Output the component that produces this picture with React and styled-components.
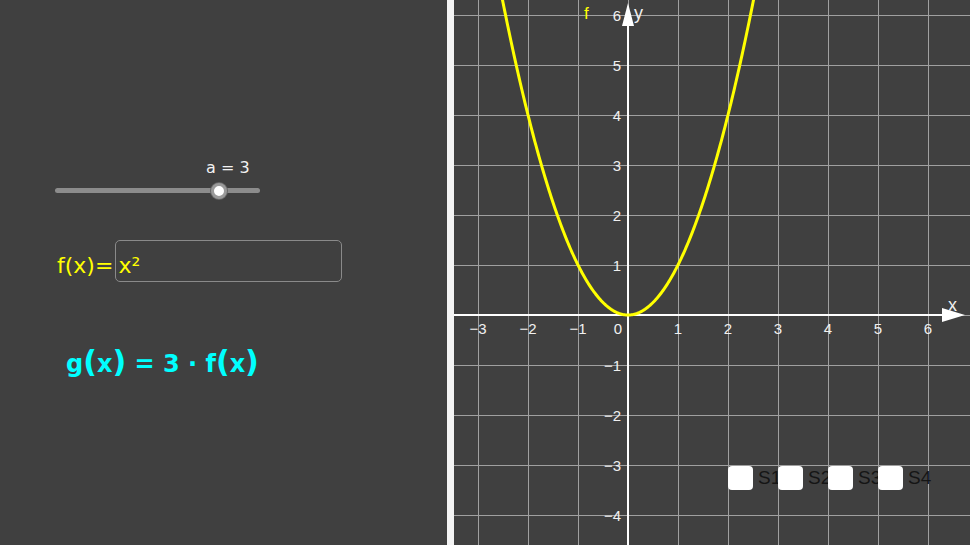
import styled, { createGlobalStyle } from "styled-components"

const BG = "#404040"
const UNIT = 50
const OX = 174
const OY = 315
const GW = 516
const GH = 545

const slider = { name: "a", value: 3, min: -5, max: 5 }
const checks = ["S1", "S2", "S3", "S4"]

const GlobalStyle = createGlobalStyle`
  html, body {
    margin: 0;
    padding: 0;
    background: ${BG};
    overflow: hidden;
  }
  body {
    font-family: "DejaVu Sans", "Liberation Sans", sans-serif;
  }
`

const Page = styled.div`
  display: flex;
  width: 970px;
  height: 545px;
  background: ${BG};
`

const AlgebraPanel = styled.div`
  width: 447px;
  flex-shrink: 0;
  display: flex;
  flex-direction: column;
  padding-top: 158px;
  box-sizing: border-box;
`

const Divider = styled.div`
  width: 7px;
  flex-shrink: 0;
  background: #f4f4f4;
`

const GraphPanel = styled.div`
  position: relative;
  flex: 1;
  overflow: hidden;
`

const SliderLabel = styled.div`
  margin-left: 206px;
  font-size: 16px;
  line-height: 20px;
  color: #f2f2f2;
`

const SliderTrack = styled.div`
  position: relative;
  margin: 10px 0 0 55px;
  width: 205px;
  height: 5px;
  border-radius: 3px;
  background: #8c8c8c;
`

const SliderThumb = styled.div`
  position: absolute;
  top: 50%;
  width: 10px;
  height: 10px;
  border-radius: 50%;
  background: #ffffff;
  border: 3px solid #9a9a9a;
  box-shadow: 0 0 0 1px #666666;
  transform: translate(-50%, -50%);
`

const InputRow = styled.div`
  display: flex;
  align-items: center;
  margin: 47px 0 0 57px;
  color: #ffff00;
  font-size: 22px;
`

const InputLabel = styled.span`
  padding-top: 9px;
  margin-right: 2px;
`

const InputBox = styled.div`
  display: flex;
  align-items: center;
  width: 227px;
  height: 42px;
  box-sizing: border-box;
  padding: 9px 0 0 2px;
  border: 1px solid #8a8a8a;
  border-radius: 5px;
`

const Formula = styled.div`
  margin: 60px 0 0 66px;
  font-family: "DejaVu Sans", sans-serif;
  font-weight: bold;
  font-size: 24px;
  line-height: 40px;
  color: #00ffff;
  white-space: nowrap;
`

const Paren = styled.span`
  font-size: 30px;
  font-weight: ${(p) => (p.$thin ? "normal" : "bold")};
`

const CheckRow = styled.div`
  position: absolute;
  left: 274px;
  top: 466px;
  display: flex;
`

const CheckItem = styled.div`
  display: flex;
  align-items: center;
  gap: 5px;
  width: 50px;
  flex-shrink: 0;
`

const CheckBox = styled.div`
  width: 25px;
  height: 24px;
  flex-shrink: 0;
  border-radius: 4px;
  background: #ffffff;
`

const CheckLabel = styled.span`
  font-family: "Liberation Sans", sans-serif;
  font-size: 19px;
  color: #151515;
  white-space: nowrap;
`

const px = (x) => OX + x * UNIT
const py = (y) => OY - y * UNIT
const num = (k) => (k < 0 ? "\u2212" + -k : String(k))

function Graph() {
  const xs = []
  for (let k = -4; k <= 7; k++) xs.push(k)
  const ys = []
  for (let k = -5; k <= 7; k++) ys.push(k)

  const pts = []
  for (let x = -2.7; x <= 2.7001; x += 0.02) pts.push(`${px(x).toFixed(2)},${py(x * x).toFixed(2)}`)

  return (
    <svg width={GW} height={GH} style={{ display: "block" }}>
      {xs.map((k) => (
        <line key={"gx" + k} x1={px(k) + 0.5} x2={px(k) + 0.5} y1={0} y2={GH} stroke="#a0a0a0" strokeWidth="1" />
      ))}
      {ys.map((k) => (
        <line key={"gy" + k} x1={0} x2={GW} y1={py(k) + 0.5} y2={py(k) + 0.5} stroke="#a0a0a0" strokeWidth="1" />
      ))}

      <line x1={0} x2={488} y1={OY} y2={OY} stroke="#ffffff" strokeWidth="2" />
      <polygon points={`511,${OY} 488,${OY - 7} 488,${OY + 7}`} fill="#ffffff" />
      <line x1={OX} x2={OX} y1={26} y2={GH} stroke="#ffffff" strokeWidth="2" />
      <polygon points={`${OX},3 ${OX - 6},26 ${OX + 6},26`} fill="#ffffff" />

      <g fontFamily="'Liberation Sans', sans-serif" fontSize="15" fill="#f0f0f0">
        {[-3, -2, -1, 1, 2, 3, 4, 5, 6].map((k) => (
          <text key={"lx" + k} x={px(k)} y={334} textAnchor="middle">
            {num(k)}
          </text>
        ))}
        <text x={OX - 6} y={334} textAnchor="end">0</text>
        {[6, 5, 4, 3, 2, 1, -1, -2, -3, -4].map((k) => (
          <text key={"ly" + k} x={OX - 7} y={py(k) + 6} textAnchor="end">
            {num(k)}
          </text>
        ))}
        <text x={494} y={311} fontSize="18">x</text>
        <text x={180} y={19} fontSize="18">y</text>
      </g>

      <polyline points={pts.join(" ")} fill="none" stroke="#ffff00" strokeWidth="3" strokeLinejoin="round" />
      <text x={130} y={19} fontFamily="'Liberation Sans', sans-serif" fontSize="17" fill="#ffff00">f</text>
    </svg>
  )
}

const App = () => {
  const pct = ((slider.value - slider.min) / (slider.max - slider.min)) * 100
  return (
    <Page>
      <GlobalStyle />
      <AlgebraPanel>
        <SliderLabel>{slider.name} = {slider.value}</SliderLabel>
        <SliderTrack>
          <SliderThumb style={{ left: pct + "%" }} />
        </SliderTrack>
        <InputRow>
          <InputLabel>f(x)=</InputLabel>
          <InputBox>x²</InputBox>
        </InputRow>
        <Formula>
          g<Paren>(</Paren>x<Paren>)</Paren> = 3 · f<Paren>(</Paren>x<Paren>)</Paren>
        </Formula>
      </AlgebraPanel>
      <Divider />
      <GraphPanel>
        <Graph />
        <CheckRow>
          {checks.map((c) => (
            <CheckItem key={c}>
              <CheckBox />
              <CheckLabel>{c}</CheckLabel>
            </CheckItem>
          ))}
        </CheckRow>
      </GraphPanel>
    </Page>
  )
}

export default App
